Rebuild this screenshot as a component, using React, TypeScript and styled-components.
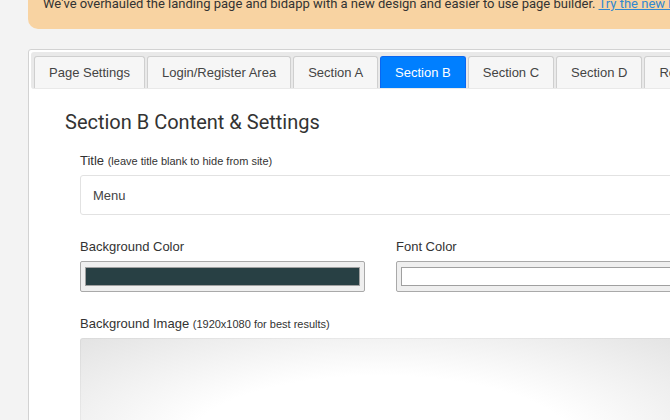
import React from 'react';
import styled, { createGlobalStyle } from 'styled-components';

const GlobalStyle = createGlobalStyle`
  * { box-sizing: border-box; }
  body {
    margin: 0;
    background: #f3f3f3;
    color: #333;
    font-family: "Liberation Sans", Arial, sans-serif;
    font-size: 13px;
    line-height: 16px;
  }
`;

const Viewport = styled.div`
  height: 100vh;
  overflow: hidden;
`;

const Page = styled.main`
  margin: -8px -62px 0 28px;
`;

const Notice = styled.p`
  margin: 0 0 20px;
  padding: 0 15px 14px;
  border-radius: 0 0 10px 10px;
  background: #f8d3a2;
  font-family: Roboto, sans-serif;
  font-size: 13px;
  line-height: 23px;
  white-space: nowrap;
`;

const NoticeLink = styled.a`
  color: #3288d0;
  text-decoration: underline;
`;

const Card = styled.section`
  padding: 2px;
  border: 1px solid #d2d2d2;
  border-radius: 3px;
  background: #fff;
`;

const TabBar = styled.div`
  display: flex;
  gap: 2px;
  padding: 4px 3px 0;
  border-bottom: 1px solid #e9e9e9;
  border-radius: 3px;
  background: #e9e9e9;
  overflow: hidden;
`;

const Tab = styled.button<{ $active?: boolean }>`
  flex: none;
  height: 32px;
  padding: 0 14px;
  border: 1px solid ${({ $active }) => ($active ? '#0a66f0' : '#cfcfcf')};
  border-bottom: 0;
  border-radius: 3px 3px 0 0;
  background: ${({ $active }) => ($active ? '#007fff' : '#f6f6f6')};
  color: ${({ $active }) => ($active ? '#fff' : '#444')};
  font: 13px/16px "Liberation Sans", Arial, sans-serif;
`;

const Panel = styled.div`
  padding: 20px 48px 48px 34px;
`;

const Heading = styled.h2`
  margin: 0;
  font: 400 20px/26px Roboto, sans-serif;
`;

const Form = styled.form`
  display: grid;
  grid-template-columns: 1fr 1fr;
  gap: 24px 31px;
  padding: 18px 0 0 15px;
`;

const Field = styled.label<{ $wide?: boolean }>`
  display: flex;
  flex-direction: column;
  gap: 6px;
  grid-column: ${({ $wide }) => ($wide ? '1 / -1' : 'auto')};
`;

const Hint = styled.small`
  font-size: 11px;
`;

const TextInput = styled.input`
  height: 40px;
  padding: 0 12px;
  border: 1px solid #e2e2e2;
  border-radius: 3px;
  background: #fff;
  color: #444;
  font: 13px/16px "Liberation Sans", Arial, sans-serif;
`;

const ColorInput = styled.input`
  appearance: none;
  width: 100%;
  height: 31px;
  padding: 5px 4px;
  border: 1px solid #a9a9a9;
  border-radius: 2px;
  background: #efefef;

  &::-webkit-color-swatch-wrapper { padding: 0; }
  &::-webkit-color-swatch { border: 1px solid #a0a0a0; border-radius: 0; }
`;

const ImagePreview = styled.div`
  height: 216px;
  border: 1px solid rgba(0, 0, 0, 0.04);
  border-radius: 3px;
  background: radial-gradient(ellipse farthest-corner at center, #fff 46%, #e3e3e3 100%) border-box;
`;

const tabs = ['Page Settings', 'Login/Register Area', 'Section A', 'Section B', 'Section C', 'Section D', 'Register'];

export default function App() {
  const [active, setActive] = React.useState('Section B');

  return (
    <Viewport>
      <GlobalStyle />
      <Page>
        <Notice>
          We've overhauled the landing page and bidapp with a new design and easier to use page builder.{' '}
          <NoticeLink href="#builder">Try the new builder</NoticeLink>
        </Notice>
        <Card>
          <TabBar role="tablist">
            {tabs.map((name) => (
              <Tab
                key={name}
                type="button"
                role="tab"
                aria-selected={name === active}
                $active={name === active}
                onClick={() => setActive(name)}
              >
                {name}
              </Tab>
            ))}
          </TabBar>
          <Panel role="tabpanel">
            <Heading>Section B Content &amp; Settings</Heading>
            <Form>
              <Field $wide>
                <span>Title <Hint>(leave title blank to hide from site)</Hint></span>
                <TextInput type="text" defaultValue="Menu" />
              </Field>
              <Field>
                <span>Background Color</span>
                <ColorInput type="color" defaultValue="#284044" />
              </Field>
              <Field>
                <span>Font Color</span>
                <ColorInput type="color" defaultValue="#ffffff" />
              </Field>
              <Field as="div" $wide>
                <span>Background Image <Hint>(1920x1080 for best results)</Hint></span>
                <ImagePreview />
              </Field>
            </Form>
          </Panel>
        </Card>
      </Page>
    </Viewport>
  );
}
